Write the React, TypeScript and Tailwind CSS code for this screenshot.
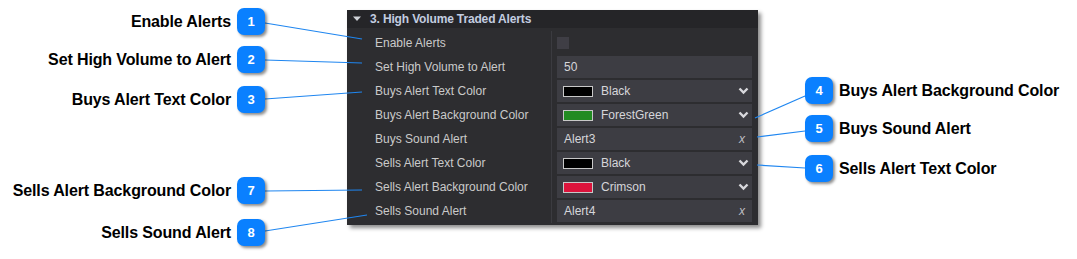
import React from "react";

type Row =
  | { label: string; kind: "check" }
  | { label: string; kind: "text"; value: string }
  | { label: string; kind: "color"; value: string; swatch: string }
  | { label: string; kind: "sound"; value: string };

const rows: Row[] = [
  { label: "Enable Alerts", kind: "check" },
  { label: "Set High Volume to Alert", kind: "text", value: "50" },
  { label: "Buys Alert Text Color", kind: "color", value: "Black", swatch: "#000000" },
  { label: "Buys Alert Background Color", kind: "color", value: "ForestGreen", swatch: "#228b22" },
  { label: "Buys Sound Alert", kind: "sound", value: "Alert3" },
  { label: "Sells Alert Text Color", kind: "color", value: "Black", swatch: "#000000" },
  { label: "Sells Alert Background Color", kind: "color", value: "Crimson", swatch: "#dc143c" },
  { label: "Sells Sound Alert", kind: "sound", value: "Alert4" },
];

const leftCallouts = [
  { n: 1, text: "Enable Alerts", top: 8 },
  { n: 2, text: "Set High Volume to Alert", top: 46 },
  { n: 3, text: "Buys Alert Text Color", top: 86 },
  { n: 7, text: "Sells Alert Background Color", top: 177 },
  { n: 8, text: "Sells Sound Alert", top: 219 },
];

const rightCallouts = [
  { n: 4, text: "Buys Alert Background Color", top: 77 },
  { n: 5, text: "Buys Sound Alert", top: 115 },
  { n: 6, text: "Sells Alert Text Color", top: 155 },
];

const lines = [
  [265, 23, 362, 39],
  [265, 60, 362, 63],
  [265, 99, 362, 92],
  [265, 191, 362, 190],
  [265, 231, 367, 215],
  [805, 96, 755, 118],
  [805, 131, 757, 137],
  [805, 168, 757, 165],
];

function Badge({ n }: { n: number }) {
  return (
    <div className="flex h-[27px] w-[28px] shrink-0 items-center justify-center rounded-[7px] bg-[#0a80ff] text-[13px] font-bold text-white shadow-[2px_2px_3px_rgba(0,0,0,0.45)]">
      {n}
    </div>
  );
}

function Chevron() {
  return (
    <svg width="11" height="8" viewBox="0 0 11 8" className="ml-auto mr-[3px]">
      <path d="M1.5 1.5 L5.5 5.5 L9.5 1.5" fill="none" stroke="#d8d8dc" strokeWidth="2.4" />
    </svg>
  );
}

function Field({ row }: { row: Row }) {
  if (row.kind === "check") {
    return (
      <div className="flex h-[22px] items-center">
        <div className="h-[12px] w-[12px] bg-[#3f3e45]" />
      </div>
    );
  }
  const box = "flex h-[22px] items-center bg-[#3d3d43] text-[12px] text-[#d6d6da]";
  if (row.kind === "text") {
    return <div className={`${box} pl-[7px]`}>{row.value}</div>;
  }
  if (row.kind === "sound") {
    return (
      <div className={`${box} pl-[7px] pr-[7px]`}>
        <span>{row.value}</span>
        <span className="ml-auto italic text-[#bdbdc2]">x</span>
      </div>
    );
  }
  return (
    <div className={`${box} pl-[6px]`}>
      <div
        className="h-[11px] w-[30px] border border-[#c8c8c8]"
        style={{ backgroundColor: row.swatch }}
      />
      <span className="ml-[8px]">{row.value}</span>
      <Chevron />
    </div>
  );
}

export default function App() {
  return (
    <div className="relative h-[259px] w-[1077px] overflow-hidden bg-white font-['Liberation_Sans',Arial,sans-serif]">
      <div className="pl-[347px] pt-[10px]">
        <div className="w-[411px] bg-[#2d2d30] pb-[2px] shadow-[3px_3px_4px_rgba(0,0,0,0.45)]">
          <div className="flex h-[18px] items-center bg-[#252528] pl-[5px]">
            <svg width="10" height="6" viewBox="0 0 10 6">
              <path d="M1 0.5 H9 L5 5 Z" fill="#cfd2d8" />
            </svg>
            <span className="ml-[8px] text-[12px] font-bold tracking-[-0.15px] text-[#c3cde0]">
              3. High Volume Traded Alerts
            </span>
          </div>
          <div className="flex pt-[3px]">
            <div className="w-[205px] shrink-0 border-r border-[#3b3b40]">
              {rows.map((r) => (
                <div
                  key={r.label}
                  className="flex h-[24px] items-center pl-[28px] text-[12px] text-[#cacaca]"
                >
                  {r.label}
                </div>
              ))}
            </div>
            <div className="flex-1 pl-[5px] pr-[6px]">
              {rows.map((r) => (
                <div key={r.label} className="py-[1px]">
                  <Field row={r} />
                </div>
              ))}
            </div>
          </div>
        </div>
      </div>

      <svg className="pointer-events-none absolute inset-0" width="1077" height="259">
        {lines.map(([x1, y1, x2, y2], i) => (
          <line key={i} x1={x1} y1={y1} x2={x2} y2={y2} stroke="#1f86f0" strokeWidth="1.2" />
        ))}
      </svg>

      {leftCallouts.map((c) => (
        <div
          key={c.n}
          className="absolute right-[812px] flex items-center gap-[6px]"
          style={{ top: c.top }}
        >
          <span className="whitespace-nowrap text-[16px] font-bold tracking-[-0.12px] text-black">
            {c.text}
          </span>
          <Badge n={c.n} />
        </div>
      ))}

      {rightCallouts.map((c) => (
        <div
          key={c.n}
          className="absolute left-[805px] flex items-center gap-[6px]"
          style={{ top: c.top }}
        >
          <Badge n={c.n} />
          <span className="whitespace-nowrap text-[16px] font-bold tracking-[-0.12px] text-black">
            {c.text}
          </span>
        </div>
      ))}
    </div>
  );
}
